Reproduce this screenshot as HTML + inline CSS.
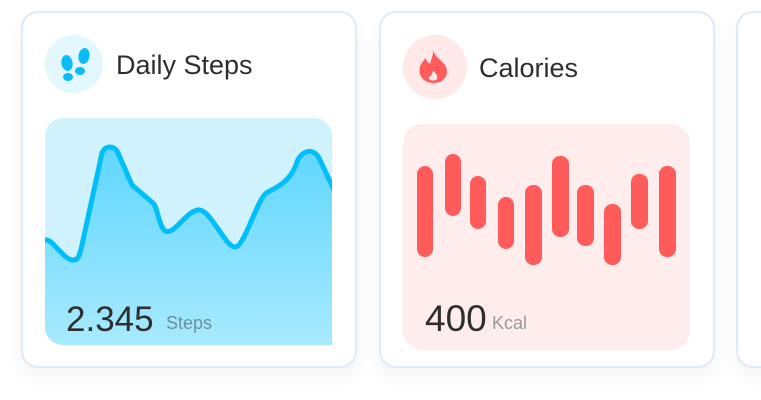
<!DOCTYPE html>
<html><head><meta charset="utf-8"><style>
*{margin:0;padding:0;box-sizing:border-box}
body{width:761px;height:400px;background:#fff;position:relative;overflow:hidden;font-family:"Liberation Sans",sans-serif}
.card{position:absolute;top:11px;width:336px;height:357px;border:2px solid #e1e9f5;border-radius:17px;background:#fff;box-shadow:0 8px 18px rgba(30,50,90,0.06)}
.t{position:absolute;font-size:27px;color:#2e2e2e}
</style></head><body>
<div class="card" style="left:21px"></div>
<div class="card" style="left:379px"></div>
<div class="card" style="left:736px"></div>

<svg width="761" height="400" style="position:absolute;left:0;top:0">
<defs>
<linearGradient id="g" x1="0" y1="0" x2="0" y2="1"><stop offset="0" stop-color="#5fd6fd"/><stop offset="1" stop-color="#a8eafe"/></linearGradient>
<clipPath id="c1"><path d="M45 136a18 18 0 0 1 18-18h251a18 18 0 0 1 18 18v209H63a18 18 0 0 1-18-18z"/></clipPath>
</defs>
<circle cx="74" cy="64" r="29" fill="#e3f7fe"/>
<g fill="#0abdf8">
<ellipse cx="67" cy="63" rx="5.5" ry="8" transform="rotate(-10 67 63)"/>
<ellipse cx="68" cy="77" rx="5" ry="4"/>
<ellipse cx="84" cy="56" rx="5.5" ry="8" transform="rotate(10 84 56)"/>
<ellipse cx="80" cy="71" rx="5" ry="4"/>
</g>
<g clip-path="url(#c1)">
<rect x="45" y="118" width="287" height="227" fill="#cff2fd"/>
<path d="M45 240 C52 238 62 258 72 260 C78 261 80 255 82 245 L102 153 C105 145 115 145 118 153 L132 185 L153 203 C158 208 158 224 165 231 C175 235 185 212 198 210 C210 208 225 247 235 247 C245 247 258 195 268 192 C280 186 290 180 296 165 C300 150 314 146 320 160 L334 190 V345 H45 Z" fill="url(#g)"/>
<path d="M45 240 C52 238 62 258 72 260 C78 261 80 255 82 245 L102 153 C105 145 115 145 118 153 L132 185 L153 203 C158 208 158 224 165 231 C175 235 185 212 198 210 C210 208 225 247 235 247 C245 247 258 195 268 192 C280 186 290 180 296 165 C300 150 314 146 320 160 L334 190" fill="none" stroke="#00bff8" stroke-width="5" stroke-linejoin="round" stroke-linecap="round"/>
</g>
<text x="66" y="331" font-family="Liberation Sans" font-size="35" fill="#2e2e2e">2.345</text>
<text x="166" y="329" font-family="Liberation Sans" font-size="18" fill="#6f8f9d">Steps</text>

<circle cx="435" cy="67" r="32" fill="#ffe8e8"/>
<path d="M433 49 C434 56 440 59 445 65 C450 73 445 83 434 83 C423 83 418 75 420 67 C421 63 424 61 425 58 C427 61 428 63 430 64 C431 59 434 54 433 49Z" fill="#ff5b5b"/>
<path d="M433 71 C436 73 438 76 437 79 C436 81 430 81 429 79 C428 77 430 76 431 76 C432 74 432 73 433 71Z" fill="#ffe8e8"/>
<rect x="403" y="124" width="287" height="226" rx="20" fill="#ffecec"/>
<g fill="#ff5b5b">
<rect x="417" y="166" width="16" height="91" rx="8"/>
<rect x="445" y="154" width="16" height="62" rx="8"/>
<rect x="470" y="176" width="16" height="53" rx="8"/>
<rect x="498" y="197" width="16" height="52" rx="8"/>
<rect x="525" y="185" width="17" height="80" rx="8"/>
<rect x="552" y="156" width="17" height="81" rx="8"/>
<rect x="577" y="185" width="17" height="61" rx="8"/>
<rect x="604" y="204" width="17" height="61" rx="8"/>
<rect x="631" y="174" width="17" height="55" rx="8"/>
<rect x="659" y="166" width="17" height="91" rx="8"/>
</g>
<text x="425" y="331" font-family="Liberation Sans" font-size="37" fill="#2e2e2e">400</text>
<text x="492" y="329" font-family="Liberation Sans" font-size="18" fill="#9a9a9a">Kcal</text>
</svg>
<div class="t" style="left:116px;top:50px">Daily Steps</div>
<div class="t" style="left:479px;top:53px">Calories</div>
</body></html>
